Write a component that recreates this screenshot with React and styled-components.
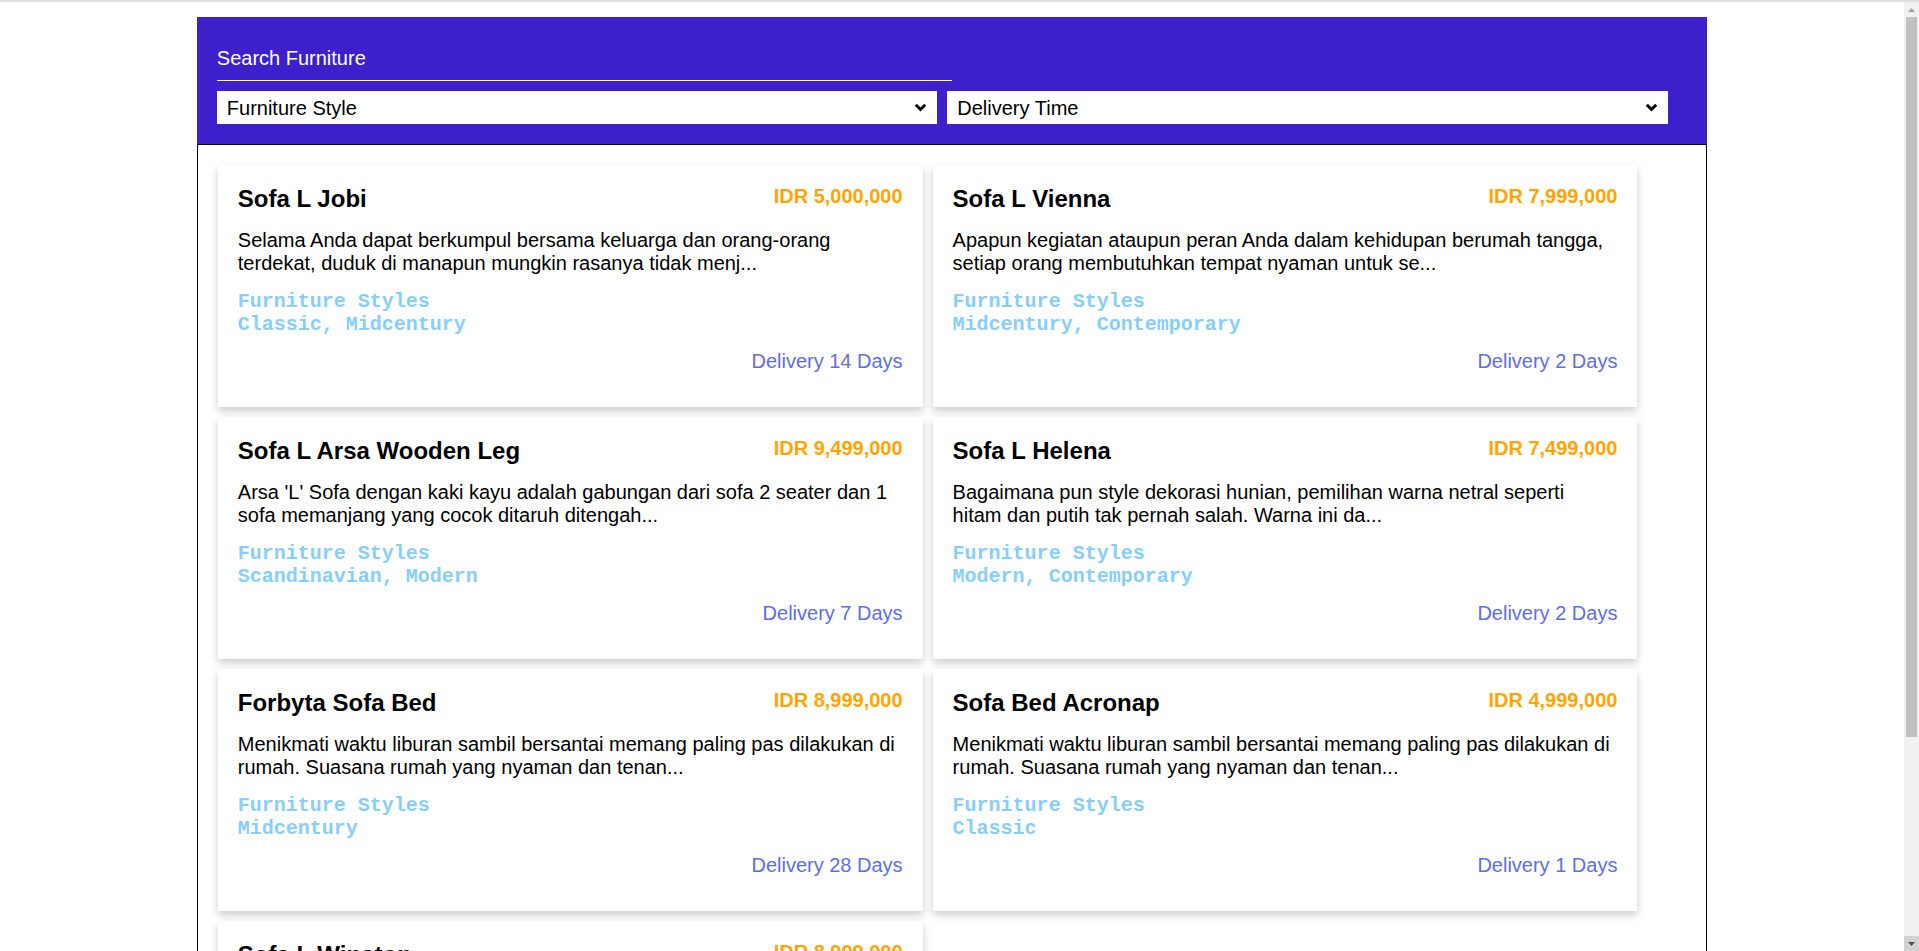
import React from 'react'
import styled, { createGlobalStyle } from 'styled-components'

const GlobalStyle = createGlobalStyle`
  body {
    margin: 8px 23px 8px 8px;
    font-family: 'Liberation Sans', Arial, sans-serif;
    background: #fff;
  }
`

const furnitures = [
  {
    name: 'Sofa L Jobi',
    price: 'IDR 5,000,000',
    description:
      'Selama Anda dapat berkumpul bersama keluarga dan orang-orang terdekat, duduk di manapun mungkin rasanya tidak menj...',
    styles: 'Classic, Midcentury',
    delivery: 14,
  },
  {
    name: 'Sofa L Vienna',
    price: 'IDR 7,999,000',
    description:
      'Apapun kegiatan ataupun peran Anda dalam kehidupan berumah tangga, setiap orang membutuhkan tempat nyaman untuk se...',
    styles: 'Midcentury, Contemporary',
    delivery: 2,
  },
  {
    name: 'Sofa L Arsa Wooden Leg',
    price: 'IDR 9,499,000',
    description:
      "Arsa 'L' Sofa dengan kaki kayu adalah gabungan dari sofa 2 seater dan 1 sofa memanjang yang cocok ditaruh ditengah...",
    styles: 'Scandinavian, Modern',
    delivery: 7,
  },
  {
    name: 'Sofa L Helena',
    price: 'IDR 7,499,000',
    description:
      'Bagaimana pun style dekorasi hunian, pemilihan warna netral seperti hitam dan putih tak pernah salah. Warna ini da...',
    styles: 'Modern, Contemporary',
    delivery: 2,
  },
  {
    name: 'Forbyta Sofa Bed',
    price: 'IDR 8,999,000',
    description:
      'Menikmati waktu liburan sambil bersantai memang paling pas dilakukan di rumah. Suasana rumah yang nyaman dan tenan...',
    styles: 'Midcentury',
    delivery: 28,
  },
  {
    name: 'Sofa Bed Acronap',
    price: 'IDR 4,999,000',
    description:
      'Menikmati waktu liburan sambil bersantai memang paling pas dilakukan di rumah. Suasana rumah yang nyaman dan tenan...',
    styles: 'Classic',
    delivery: 1,
  },
  {
    name: 'Sofa L Winston',
    price: 'IDR 8,999,000',
    description:
      'Sofa L dengan desain modern yang cocok untuk ruang keluarga Anda, nyaman dan elegan untuk bersantai bersama ke...',
    styles: 'Modern',
    delivery: 7,
  },
]

// browser chrome bits seen in the screenshot (top edge + scrollbar)
const TopEdge = styled.div`
  position: fixed;
  top: 0;
  left: 0;
  right: 0;
  height: 2px;
  background: #dedede;
  z-index: 5;
`

const ScrollTrack = styled.div`
  position: fixed;
  top: 0;
  right: 0;
  width: 15px;
  height: 100vh;
  background: #f1f1f1;
  z-index: 4;
`

const ScrollThumb = styled.div`
  position: absolute;
  top: 17px;
  left: 2px;
  width: 11px;
  height: 720px;
  background: #c1c1c1;
`

const ScrollButton = styled.div`
  position: absolute;
  left: 0;
  width: 15px;
  height: 15px;
  display: flex;
  align-items: center;
  justify-content: center;
  ${(p) => (p.$bottom ? 'bottom: 0; background: #d2d2d2;' : 'top: 2px;')}
`

const Wrapper = styled.div`
  width: 80%;
  margin: 9px auto 0;
`

const Header = styled.div`
  background: #3d20cc;
  padding: 20px;
`

const SearchInput = styled.input`
  display: block;
  width: 50%;
  box-sizing: border-box;
  background: transparent;
  border: none;
  border-bottom: 1px solid #fff;
  padding: 10px 0;
  margin: 0 0 10px;
  font-family: 'Liberation Sans', Arial, sans-serif;
  font-size: 20px;
  color: #fff;
  caret-color: #fff;
  outline: none;

  &::placeholder {
    color: #fff;
  }
`

const FilterRow = styled.div`
  display: flex;
`

const SelectBox = styled.div`
  position: relative;
  width: 49%;
  margin-right: 10px;
`

const Select = styled.select`
  appearance: none;
  -webkit-appearance: none;
  display: block;
  width: 100%;
  height: 33px;
  border: none;
  border-radius: 0;
  background: #fff;
  padding: 0 40px 0 10px;
  font-family: 'Liberation Sans', Arial, sans-serif;
  font-size: 20px;
  color: #000;
  outline: none;
`

const Chevron = styled.svg`
  position: absolute;
  right: 10px;
  top: 12px;
  width: 13px;
  height: 9px;
  pointer-events: none;
`

const Content = styled.div`
  border: 1px solid #000;
  padding: 20px;
  display: flex;
  flex-wrap: wrap;
  gap: 10px;
`

const Card = styled.div`
  width: 48%;
  box-sizing: border-box;
  background: #fff;
  padding: 20px 20px 34px;
  box-shadow: 0 4px 8px 0 rgba(0, 0, 0, 0.2);
`

const CardTop = styled.div`
  display: flex;
  justify-content: space-between;
  align-items: flex-start;
  margin-bottom: 16px;
`

const Title = styled.h2`
  margin: 0;
  font-size: 24px;
  font-weight: bold;
  color: #000;
`

const Price = styled.span`
  font-size: 20px;
  font-weight: bold;
  color: orange;
`

const Description = styled.p`
  margin: 0 0 15px;
  font-size: 20px;
  color: #000;
`

const Styles = styled.div`
  font-family: 'Liberation Mono', 'Courier New', monospace;
  font-weight: bold;
  font-size: 20px;
  color: lightskyblue;
  margin-bottom: 14px;
`

const Delivery = styled.div`
  text-align: right;
  font-size: 20px;
  color: #5f6ee3;
`

const Dropdown = ({ label, options }) => (
  <SelectBox>
    <Select defaultValue=''>
      <option value='' disabled>
        {label}
      </option>
      {options.map((o) => (
        <option key={o} value={o}>
          {o}
        </option>
      ))}
    </Select>
    <Chevron viewBox='0 0 13 9'>
      <path
        d='M1.8 1.8 L6.5 6.5 L11.2 1.8'
        fill='none'
        stroke='#000'
        strokeWidth='3'
      />
    </Chevron>
  </SelectBox>
)

const FurnitureCard = ({ item }) => (
  <Card>
    <CardTop>
      <Title>{item.name}</Title>
      <Price>{item.price}</Price>
    </CardTop>
    <Description>{item.description}</Description>
    <Styles>
      <div>Furniture Styles</div>
      <div>{item.styles}</div>
    </Styles>
    <Delivery>Delivery {item.delivery} Days</Delivery>
  </Card>
)

const App = () => {
  return (
    <>
      <GlobalStyle />
      <TopEdge />
      <ScrollTrack>
        <ScrollButton>
          <svg width='7' height='4' viewBox='0 0 7 4'>
            <path d='M0 4 L3.5 0 L7 4 Z' fill='#a3a3a3' />
          </svg>
        </ScrollButton>
        <ScrollThumb />
        <ScrollButton $bottom>
          <svg width='7' height='4' viewBox='0 0 7 4'>
            <path d='M0 0 L3.5 4 L7 0 Z' fill='#505050' />
          </svg>
        </ScrollButton>
      </ScrollTrack>
      <Wrapper>
        <Header>
          <SearchInput type='text' placeholder='Search Furniture' autoFocus />
          <FilterRow>
            <Dropdown
              label='Furniture Style'
              options={['Classic', 'Midcentury', 'Contemporary', 'Scandinavian', 'Modern']}
            />
            <Dropdown
              label='Delivery Time'
              options={['1 Week', '2 Weeks', '1 Month', 'More']}
            />
          </FilterRow>
        </Header>
        <Content>
          {furnitures.map((item) => (
            <FurnitureCard key={item.name} item={item} />
          ))}
        </Content>
      </Wrapper>
    </>
  )
}

export default App
